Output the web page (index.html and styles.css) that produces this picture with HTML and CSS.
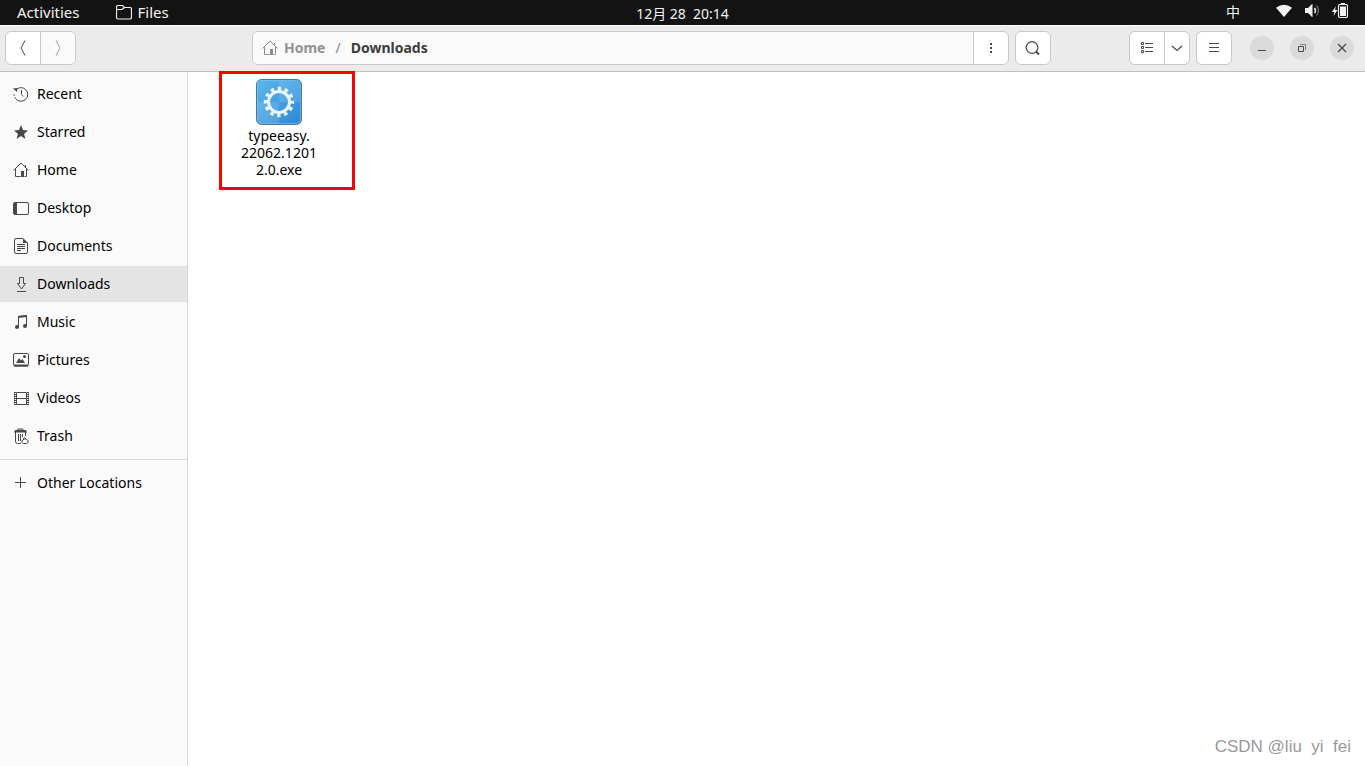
FILE: index.html
```html
<!DOCTYPE html>
<html lang="en">
<head>
    <meta charset="UTF-8">
    <meta name="viewport" content="width=device-width, initial-scale=1.0">
    <title>Downloads</title>
    <link rel="stylesheet" href="styles.css">
</head>
<body>
    <div class="topbar">
        <div class="topbar-left">
            <button class="top-item">Activities</button>
            <button class="top-item app-menu">
                <svg width="16" height="15" viewBox="0 0 16 15" fill="none" stroke="#f2f2f2"><path d="M.5 12V2Q.5.5 2 .5h4.500L8.500 2.500H14Q15.500 2.500 15.500 4v8.500q0 1.500-1.500 1.500H2Q.5 14 .5 12zM.5 4.500h5.500L8.500 2.500" stroke-width="1.200"/></svg>
                Files
            </button>
        </div>
        <button class="top-item clock">12月 28&nbsp; 20:14</button>
        <div class="topbar-right">
            <button class="top-item">中</button>
            <button class="top-item status" aria-label="System menu">
                <svg width="16" height="16" viewBox="0 0 16 16" fill="#f2f2f2"><path d="M0 4.800Q8-1.500 16 4.800L8 14z"/></svg>
                <svg width="16" height="16" viewBox="0 0 16 16"><path d="M1 5h3l4-4h.5v13H8l-4-4H1z" fill="#f2f2f2"/><path d="M10.500 5q2 2.500 0 5" fill="none" stroke="#f2f2f2" stroke-width="1.500"/><path d="M12.500 2.500q4 5 0 10" fill="none" stroke="#777" stroke-width="1.200"/></svg>
                <svg width="16" height="16" viewBox="0 0 16 16"><path d="M4 3L0 9h2.500L1.500 13 5.500 7H3z" fill="#f2f2f2"/><rect x="6.500" y="1.500" width="9" height="13" rx="1.500" fill="none" stroke="#f2f2f2" stroke-width="1.200"/><path d="M9 0h4v1.500H9zM8 3.500h6v9.500H8z" fill="#f2f2f2"/></svg>
            </button>
        </div>
    </div>

    <header class="header">
        <div class="group">
            <button class="btn" aria-label="Back"><svg width="16" height="16" viewBox="0 0 16 16"><path d="M10 .5L6 8l4 7.500"/></svg></button>
            <button class="btn off" aria-label="Forward" disabled><svg width="16" height="16" viewBox="0 0 16 16"><path d="M6 .5L10 8l-4 7.500"/></svg></button>
        </div>
        <div class="location">
            <div class="group pathbar">
                <nav class="path">
                    <a href="#" class="crumb">
                        <svg width="16" height="16" viewBox="0 0 16 16"><use href="#home"/></svg>
                        Home
                    </a>
                    <span class="slash">/</span>
                    <a href="#" class="crumb current">Downloads</a>
                </nav>
                <button class="btn" aria-label="Folder menu"><svg width="16" height="16" viewBox="0 0 16 16"><path d="M7 3h2v2H7zM7 7h2v2H7zM7 11h2v2H7z" class="solid"/></svg></button>
            </div>
            <div class="group">
                <button class="btn" aria-label="Search"><svg width="16" height="16" viewBox="0 0 16 16"><circle cx="7" cy="7.500" r="5.800" stroke-width="1.200"/><path d="M11 11.500l3 3" stroke-width="2"/></svg></button>
            </div>
        </div>
        <div class="group">
            <button class="btn" aria-label="List view"><svg width="16" height="16" viewBox="0 0 16 16"><path d="M2.500 2.500h2v2h-2zM2.500 6.500h2v2h-2zM2.500 10.500h2v2h-2zM6 3.500h8M6 7.500h8M6 11.500h8"/></svg></button>
            <button class="btn narrow" aria-label="View options"><svg width="16" height="16" viewBox="0 0 16 16"><path d="M3 6l5 4.500L13 6" stroke-width="1.200"/></svg></button>
        </div>
        <div class="group menu">
            <button class="btn" aria-label="Menu"><svg width="16" height="16" viewBox="0 0 16 16"><path d="M3 3.500h10M3 7.500h10M3 11.500h10"/></svg></button>
        </div>
        <div class="window-buttons">
            <button class="round" aria-label="Minimize"><svg width="16" height="16" viewBox="0 0 16 16"><path d="M4 10.500h8"/></svg></button>
            <button class="round" aria-label="Restore"><svg width="16" height="16" viewBox="0 0 16 16"><path d="M4.500 6.500h5v5h-5z"/><path d="M6 4.500h5.500V10" opacity=".6"/></svg></button>
            <button class="round" aria-label="Close"><svg width="16" height="16" viewBox="0 0 16 16"><path d="M4 4l8 8M12 4l-8 8" stroke-width="1.300"/></svg></button>
        </div>
    </header>

    <div class="content">
        <nav class="sidebar">
            <a href="#" class="place"><svg width="16" height="16" viewBox="0 0 16 16"><path d="M2.800 4A6.800 6.800 0 1 1 2.500 12.500"/><path d="M2.500 12.500A6.800 6.800 0 0 1 1.300 7" stroke-dasharray="1.500 1.500"/><path d="M0 2.500L4.500 2 4 6z" class="solid"/><path d="M8.500 4v4.500l1.500 2"/></svg>Recent</a>
            <a href="#" class="place"><svg width="16" height="16" viewBox="0 0 16 16"><path d="M8 1l2 5 5 .5-4 3.500 1.500 5L8 12l-4.500 3L5 10 1 6.500 6 6z" class="solid"/></svg>Starred</a>
            <a href="#" class="place">
                <svg width="16" height="16" viewBox="0 0 16 16"><g id="home"><path d="M.5 8.500L8 1l7.500 7.500M2.500 7v7.500h5M13.500 7v7.500h-2M12.500 3v2"/><path d="M8 9h3v6H8z" class="solid"/></g></svg>Home</a>
            <a href="#" class="place"><svg width="16" height="16" viewBox="0 0 16 16"><rect x=".5" y="2.500" width="15" height="12" rx="1.500"/><path d="M1 3h3v11H1z" class="solid"/></svg>Desktop</a>
            <a href="#" class="place"><svg width="16" height="16" viewBox="0 0 16 16"><path d="M3 .5h7L14.500 5v9q0 1.500-1.500 1.500H3Q1.500 15.500 1.500 14V2Q1.500.5 3 .5zM4 6.500h8M4 8.500h8M4 10.500h8M4 12.500h4"/><path d="M10 .5V5h4.500z" class="solid"/></svg>Documents</a>
            <a href="#" class="place active"><svg width="16" height="16" viewBox="0 0 16 16"><path d="M6.500 1.500h4v6h2L8.500 13l-4-5.500h2zM4 15.500h9"/></svg>Downloads</a>
            <a href="#" class="place"><svg width="16" height="16" viewBox="0 0 16 16"><path d="M5.500 13V2.500l8-1V12"/><path d="M5 2l9-1v2L5 4z" class="solid"/><circle cx="4" cy="13" r="2" class="solid"/><circle cx="12" cy="12" r="2" class="solid"/></svg>Music</a>
            <a href="#" class="place"><svg width="16" height="16" viewBox="0 0 16 16"><rect x=".5" y="1.500" width="15" height="12.500" rx="1.500"/><path d="M1 12.500h14v2H1zM3 11l3-5 2 2.500L9.500 7l2.500 4z" class="solid"/><circle cx="11.500" cy="4.500" r="1.500" class="solid"/></svg>Pictures</a>
            <a href="#" class="place"><svg width="16" height="16" viewBox="0 0 16 16"><path d="M3.500 2.500h10v12h-10zM3.500 8.500h10"/><path d="M2 2v13M15 2v13" stroke-width="2" stroke-dasharray="1 1"/><path d="M1.500 2v13M15.500 2v13" opacity=".6"/></svg>Videos</a>
            <a href="#" class="place"><svg width="16" height="16" viewBox="0 0 16 16"><path d="M2.500 4v9.500q0 2 2 2H8M12.500 4v4M5.500 6v7M7.500 6v7M9.500 6v3M5 2.500V1h5v1.500"/><path d="M2 2h11l1 2.500H1z" class="solid"/><path d="M10 11l1.500-1.500L13 11M9 12.500q-1 2.500 1.500 3h3q2.500-.5 1.500-3l-2.500-1.500h-1z"/></svg>Trash</a>
            <hr class="divider">
            <a href="#" class="place"><svg width="16" height="16" viewBox="0 0 16 16"><path d="M7.500 2v11M2 7.500h11"/></svg>Other Locations</a>
        </nav>

        <main class="files">
            <div class="file">
                <svg width="46" height="46" viewBox="0 0 46 46">
                    <defs>
                        <linearGradient id="blue" x1="0" y1="0" x2="1" y2="1">
                            <stop offset="0" stop-color="#5cb8ec"/>
                            <stop offset="1" stop-color="#2a87d8"/>
                        </linearGradient>
                    </defs>
                    <rect x=".5" y=".5" width="45" height="45" rx="5" fill="url(#blue)" stroke="#50768f"/>
                    <path d="M23 2h17q4 0 4 4v17H23zM23 23v21H6q-4 0-4-4V23z" fill="#fff" opacity=".12"/>
                    <rect x="1.500" y="1.500" width="43" height="43" rx="4" fill="none" stroke="#8dcbf2" opacity=".5"/>
                    <circle cx="23" cy="23" r="10.500" fill="none" stroke="#edf4fa" stroke-width="3"/>
                    <!-- teeth: 12 around the ring -->
                    <circle cx="23" cy="23" r="13.500" fill="none" stroke="#edf4fa" stroke-width="3.500" stroke-dasharray="3.534 3.534" stroke-dashoffset="1.767"/>
                </svg>
                <span class="file-name">typeeasy.<br>22062.1201<br>2.0.exe</span>
            </div>
            <div class="highlight"></div>
            <div class="watermark">CSDN @liu&nbsp; yi&nbsp; fei</div>
        </main>
    </div>
</body>
</html>
```
FILE: styles.css
```css
* {
    box-sizing: border-box;
}

body {
    margin: 0;
    min-height: 100vh;
    display: flex;
    flex-direction: column;
    font-family: "Noto Sans", "Noto Sans CJK SC", sans-serif;
    font-size: 14px;
    color: #000;
    background-color: white;
}

button {
    font: inherit;
    color: inherit;
    padding: 0;
    border: none;
    background: none;
}

a {
    color: inherit;
    text-decoration: none;
}

svg {
    display: block;
    flex-shrink: 0;
}

/* Top panel */
.topbar {
    height: 25px;
    display: grid;
    grid-template-columns: 1fr auto 1fr;
    background-color: #131313;
    color: #f2f2f2;
}

.topbar-left,
.topbar-right {
    display: flex;
}

.topbar-left {
    padding-left: 17px;
    gap: 36px;
    font-size: 15px;
}

.topbar-right {
    justify-content: flex-end;
    padding-right: 17px;
    gap: 36px;
}

.top-item {
    height: 24px;
    line-height: 24px;
    white-space: nowrap;
}

.app-menu,
.status {
    display: flex;
    align-items: center;
}

.app-menu {
    gap: 6px;
}

.status {
    gap: 12px;
    height: 22px;
}

.clock {
    height: 25px;
    padding-top: 2px;
}

/* Header bar */
.header {
    height: 47px;
    display: flex;
    align-items: center;
    padding: 0 11px 2px 5px;
    background-color: #ebebeb;
    border-top: 1px solid white;
    border-bottom: 1px solid #bfbfbf;
}

.group {
    height: 34px;
    display: flex;
    border: 1px solid #c8c8c8;
    border-radius: 6px;
    background-color: white;
    overflow: hidden;
}

.btn {
    width: 34px;
    display: flex;
    align-items: center;
    justify-content: center;
}

.btn + .btn,
.path + .btn {
    width: 35px;
    border-left: 1px solid #c8c8c8;
}

.btn + .narrow {
    width: 25px;
}

.off {
    background-color: #fafafa;
}

.off svg {
    opacity: 0.5;
}

.header svg,
.sidebar svg {
    fill: none;
    stroke: #484848;
}

.header .solid,
.sidebar .solid {
    fill: #484848;
    stroke: none;
}

.location {
    flex: 1;
    display: flex;
    gap: 6px;
    padding: 0 78px 0 176px;
}

.pathbar {
    flex: 1;
}

.path {
    flex: 1;
    display: flex;
    align-items: center;
    gap: 10px;
    padding-left: 9px;
    background-color: #fafafa;
}

.crumb {
    display: flex;
    align-items: center;
    gap: 6px;
    font-weight: bold;
    color: #929292;
}

.crumb svg {
    opacity: 0.6;
}

.current {
    color: #3d3d3d;
}

.slash {
    color: #888;
}

.menu {
    margin-left: 6px;
}

.window-buttons {
    display: flex;
    gap: 16px;
    margin-left: 18px;
}

.round {
    width: 24px;
    height: 24px;
    display: flex;
    align-items: center;
    justify-content: center;
    border-radius: 50%;
    background-color: #dadada;
}

/* Sidebar */
.content {
    flex: 1;
    display: flex;
}

.sidebar {
    width: 188px;
    flex-shrink: 0;
    display: flex;
    flex-direction: column;
    gap: 2px;
    padding-top: 4px;
    background-color: #fafafa;
    border-right: 1px solid #d6d6d6;
}

.place {
    height: 36px;
    display: flex;
    align-items: center;
    gap: 8px;
    padding: 0 8px 2px 13px;
}

.place svg {
    margin-top: 2px;
}

.active {
    background-color: #e4e4e4;
}

.divider {
    width: 100%;
    margin: 3px 0;
    border: none;
    border-top: 1px solid #dadada;
}

/* Files */
.files {
    flex: 1;
    position: relative;
    padding: 7px 46px;
}

.file {
    width: 90px;
    display: flex;
    flex-direction: column;
    align-items: center;
    gap: 2px;
}

.file-name {
    line-height: 17px;
    text-align: center;
}

.highlight {
    position: absolute;
    top: -1px;
    left: 31px;
    width: 136px;
    height: 119px;
    border: 3px solid #f60505;
}

.watermark {
    position: absolute;
    right: 14px;
    bottom: 9px;
    font-family: "Liberation Sans", Arial, sans-serif;
    font-size: 17px;
    color: #999;
}
```
